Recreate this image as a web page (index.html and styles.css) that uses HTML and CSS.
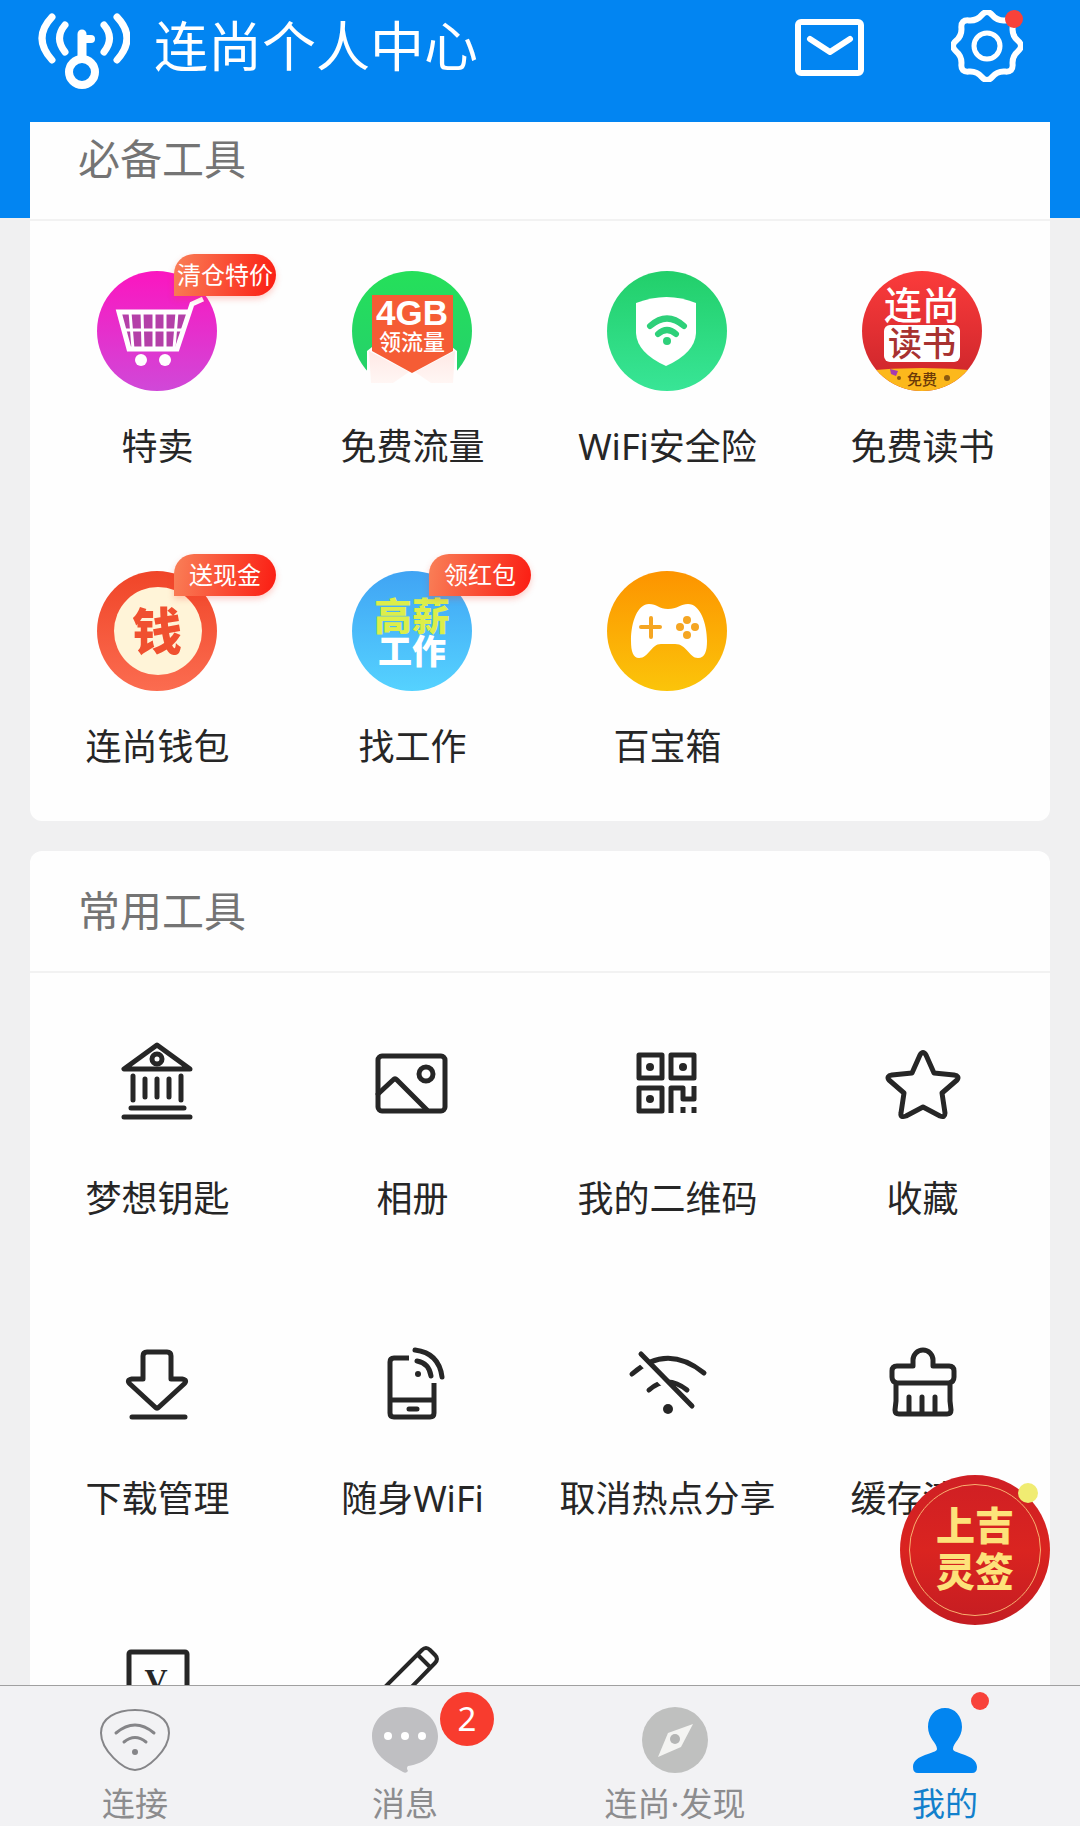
FILE: index.html
```html
<!DOCTYPE html>
<html lang="zh-CN">
<head>
<meta charset="utf-8">
<meta name="viewport" content="width=device-width, initial-scale=1">
<title>连尚个人中心</title>
<link rel="stylesheet" href="styles.css">
</head>
<body>
<header class="topbar">
  <svg class="logo" viewBox="0 0 92 92" fill="none" stroke="#fff" stroke-linecap="round">
    <g stroke-width="7">
      <path d="M14 17Q-6 38 14 60M27 25Q16 38 27 52M66 25Q77 38 66 52M79 17Q99 38 79 60"/>
      <path stroke-width="8" d="M45 39h8"/>
    </g>
    <path stroke-width="9" d="M44 34v24"/>
    <circle cx="44" cy="72" r="13" stroke-width="8"/>
  </svg>
  <h1 class="topbar-title">连尚个人中心</h1>
  <button class="icon-button" type="button" aria-label="邮件">
    <svg width="72" height="72" viewBox="0 0 72 72" fill="none" stroke="#fff" stroke-width="6" stroke-linejoin="round" stroke-linecap="round">
      <rect x="4" y="12" width="63" height="51" rx="3"/><path d="M16 29l20 13 20-13"/>
    </svg>
  </button>
  <button class="icon-button" type="button" aria-label="设置">
    <svg width="72" height="72" viewBox="0 0 72 72" fill="none" stroke="#fff">
      <path stroke-width="6" d="M67 41.2Q60.9 46.3 61.6 54.3Q62.2 62.2 54.3 61.6Q46.3 60.9 41.2 67Q36 73 30.8 67Q25.7 60.9 17.7 61.6Q9.8 62.2 10.4 54.3Q11.1 46.3 5 41.2Q-1 36 5 30.8Q11.1 25.7 10.4 17.7Q9.8 9.8 17.7 10.4Q25.7 11.1 30.8 5Q36-1 41.2 5Q46.3 11.1 54.3 10.4Q62.2 9.8 61.6 17.7Q60.9 25.7 67 30.8Q73 36 67 41.2Z"/>
      <circle cx="36" cy="36" r="13" stroke-width="5"/>
    </svg>
    <span class="dot dot-settings"></span>
  </button>
</header>

<main class="content">
  <section class="card card-first">
    <h2 class="card-title">必备工具</h2>
    <div class="grid">
      <a class="cell" href="#">
        <span class="icon">
          <svg viewBox="0 0 120 120">
            <defs><linearGradient id="g1" x2="0" y2="1"><stop offset="0" stop-color="#fb16c0"/><stop offset="1" stop-color="#d048d8"/></linearGradient></defs>
            <circle cx="60" cy="60" r="60" fill="url(#g1)"/>
            <path d="M22 41h68L80 78H31z" fill="#b440a8"/>
            <g fill="none" stroke="#fff">
              <path stroke-width="5" d="M106 28l-11 5-15 45H32L22 41h70"/>
              <path stroke-width="3" d="M26 59h60M33 41l3 37M45 41l1 37M57 41v37M68 41v37M80 41l-3 37"/>
            </g>
            <g fill="#fff"><circle cx="44" cy="89" r="6"/><circle cx="68" cy="89" r="6"/></g>
          </svg>
          <span class="tag">清仓特价</span>
        </span>
        <span class="label">特卖</span>
      </a>
      <a class="cell" href="#">
        <span class="icon">
          <svg viewBox="0 0 120 120">
            <defs>
              <linearGradient id="g2" x2="0" y2="1"><stop offset="0" stop-color="#25e05a"/><stop offset="1" stop-color="#25cf6d"/></linearGradient>
              <linearGradient id="fold" x2="0" y2="1"><stop offset="0" stop-color="#ffe9e5"/><stop offset="1" stop-color="#fff6f4"/></linearGradient>
            </defs>
            <circle cx="60" cy="60" r="60" fill="url(#g2)"/>
            <path d="M15 80l5-4h80l5 4v40H15z" fill="#fefefe"/>
            <path d="M17 80l40 21-16 11H19zM103 80l-40 21 16 11h22z" fill="url(#fold)"/>
            <path d="M20 24h81v56l-41 22-40-22z" fill="#f55c35"/>
            <text x="60" y="54" class="art-latin">4GB</text>
            <text x="60" y="79" class="art art-22">领流量</text>
          </svg>
        </span>
        <span class="label">免费流量</span>
      </a>
      <a class="cell" href="#">
        <span class="icon">
          <svg viewBox="0 0 120 120">
            <defs><linearGradient id="g3" x2="0" y2="1"><stop offset="0" stop-color="#22cf6a"/><stop offset="1" stop-color="#38e596"/></linearGradient></defs>
            <circle cx="60" cy="60" r="60" fill="url(#g3)"/>
            <path d="M29 32Q60 20 89 32V62Q88 82 59 95Q30 82 29 62z" fill="#fff"/>
            <g fill="none" stroke="#2ed07a" stroke-width="6" stroke-linecap="round"><path d="M43 55Q60 40 77 55M51 63Q60 55 69 63"/></g>
            <circle cx="60" cy="70" r="4" fill="#2ed07a"/>
          </svg>
        </span>
        <span class="label">WiFi安全险</span>
      </a>
      <a class="cell" href="#">
        <span class="icon">
          <svg viewBox="0 0 120 120">
            <defs>
              <linearGradient id="g4" x2="0" y2="1"><stop offset="0" stop-color="#fb3b3b"/><stop offset="1" stop-color="#c9242a"/></linearGradient>
              <clipPath id="c4"><circle cx="60" cy="60" r="60"/></clipPath>
            </defs>
            <g clip-path="url(#c4)">
              <rect width="120" height="120" fill="url(#g4)"/>
              <path d="M0 100Q60 94 120 100v20H0z" fill="#fcb81c"/>
              <path d="M28 98l8 2-2 5-5-2z" fill="#a63ab0"/>
              <circle cx="37" cy="107" r="2" fill="#8a5a10"/><circle cx="85" cy="107" r="3" fill="#8a5a10"/>
            </g>
            <rect x="22" y="54" width="76" height="37" rx="6" fill="#fff"/>
            <text x="60" y="48" class="art art-38">连尚</text>
            <text x="60" y="85" class="art art-34 art-brick">读书</text>
            <text x="60" y="114" class="art art-15 art-brown">免费</text>
          </svg>
        </span>
        <span class="label">免费读书</span>
      </a>
      <a class="cell" href="#">
        <span class="icon">
          <svg viewBox="0 0 120 120">
            <defs><linearGradient id="g5" x2="0" y2="1"><stop offset="0" stop-color="#f04528"/><stop offset="1" stop-color="#fb6c50"/></linearGradient></defs>
            <circle cx="60" cy="60" r="60" fill="url(#g5)"/>
            <circle cx="61" cy="60" r="44" fill="#fff4d8"/>
            <text x="60" y="79" class="art art-50 art-orange">钱</text>
          </svg>
          <span class="tag">送现金</span>
        </span>
        <span class="label">连尚钱包</span>
      </a>
      <a class="cell" href="#">
        <span class="icon">
          <svg viewBox="0 0 120 120">
            <defs><linearGradient id="g6" x2="0" y2="1"><stop offset="0" stop-color="#40a4f4"/><stop offset="1" stop-color="#55d2ff"/></linearGradient></defs>
            <circle cx="60" cy="60" r="60" fill="url(#g6)"/>
            <text x="60" y="59" class="art art-38 art-lime">高薪</text>
            <text x="60" y="93" class="art art-34 art-heavy">工作</text>
          </svg>
          <span class="tag">领红包</span>
        </span>
        <span class="label">找工作</span>
      </a>
      <a class="cell" href="#">
        <span class="icon">
          <svg viewBox="0 0 120 120">
            <defs><linearGradient id="g7" x2="0" y2="1"><stop offset="0" stop-color="#fd9400"/><stop offset="1" stop-color="#fbc40a"/></linearGradient></defs>
            <circle cx="60" cy="60" r="60" fill="url(#g7)"/>
            <path d="M42 33C50 33 52 38 61 38S74 33 81 33C93 33 100 52 100 70C100 80 98 87 91 87C82 87 80 73 68 73H54C44 73 42 87 32 87C26 87 24 80 24 70C24 50 31 33 42 33z" fill="#fff"/>
            <path d="M44 47v19M34 56h19" stroke="#f5a623" stroke-width="4" stroke-linecap="round"/>
            <g fill="#f5a623"><circle cx="80" cy="49" r="4"/><circle cx="73" cy="56" r="4"/><circle cx="88" cy="56" r="4"/><circle cx="80" cy="64" r="4"/></g>
          </svg>
        </span>
        <span class="label">百宝箱</span>
      </a>
    </div>
  </section>

  <section class="card">
    <h2 class="card-title">常用工具</h2>
    <div class="grid">
      <a class="cell" href="#">
        <span class="icon">
          <svg class="line" viewBox="0 0 120 120"><path d="M60 22L27 46h66zM36 53v24M48 56v18M60 56v18M72 56v18M84 53v24M34 85h53M27 94h66"/><circle cx="60" cy="36" r="5"/></svg>
        </span>
        <span class="label">梦想钥匙</span>
      </a>
      <a class="cell" href="#">
        <span class="icon">
          <svg class="line" viewBox="0 0 120 120"><rect x="26" y="33" width="67" height="55" rx="4"/><path d="M26 71l15-14q2-2 4 0l30 30"/><circle cx="74" cy="51" r="7"/></svg>
        </span>
        <span class="label">相册</span>
      </a>
      <a class="cell" href="#">
        <span class="icon">
          <svg class="line" viewBox="0 0 120 120">
            <path d="M32 32h23v23H32zM64 32h23v23H64zM32 65h23v23H32z"/>
            <path stroke-linecap="butt" d="M64 90V65h12v11h11V63M76 84v6M87 84v6"/>
            <g class="solid"><circle cx="43" cy="44" r="4"/><circle cx="76" cy="44" r="4"/><circle cx="43" cy="76" r="4"/></g>
          </svg>
        </span>
        <span class="label">我的二维码</span>
      </a>
      <a class="cell" href="#">
        <span class="icon">
          <svg class="line" viewBox="0 0 120 120"><path d="M58 32Q61 27 64 32L72 50L92 52Q98 53 95 57L80 70L83 90Q83 95 78 93L61 84L44 93Q38 95 39 90L42 70L27 57Q24 53 30 52L50 50z"/></svg>
        </span>
        <span class="label">收藏</span>
      </a>
      <a class="cell" href="#">
        <span class="icon">
          <svg class="line" viewBox="0 0 120 120"><path d="M46 56V33q0-4 4-4h20q4 0 4 4v23h11q6 1 2 5L62 84q-2 2-4 0L33 61q-4-4 2-5zM35 94h53"/></svg>
        </span>
        <span class="label">下载管理</span>
      </a>
      <a class="cell" href="#">
        <span class="icon">
          <svg class="line" viewBox="0 0 120 120">
            <path stroke-linecap="butt" d="M57 35H42q-4 0-4 4v51q0 4 4 4h36q4 0 4-4V60M38 77h44"/>
            <path d="M57 86h8M65 38Q77 40 79 53M63 27Q87 30 90 54"/>
            <circle class="solid" cx="66" cy="51" r="3"/>
          </svg>
        </span>
        <span class="label">随身WiFi</span>
      </a>
      <a class="cell" href="#">
        <span class="icon">
          <svg class="line" viewBox="0 0 120 120">
            <path d="M25 51Q60 20 97 50M42 67Q60 51 80 67"/>
            <path class="gap" d="M31 34l52 52"/>
            <path d="M34 31l51 52"/>
            <circle class="solid" cx="61" cy="86" r="5"/>
          </svg>
        </span>
        <span class="label">取消热点分享</span>
      </a>
      <a class="cell" href="#">
        <span class="icon">
          <svg class="line" viewBox="0 0 120 120"><path d="M51 43v-6a10 10 0 0 1 20 0v6h16q5 0 5 5v6q0 5-5 6H35q-5-1-5-6v-6q0-5 5-5zM34 60v18l-1 9q0 4 4 4h48q4 0 4-4l-1-9V60M47 74v16M60 74v16M73 74v16"/></svg>
        </span>
        <span class="label">缓存清理</span>
      </a>
      <a class="cell" href="#">
        <span class="icon">
          <svg class="line" viewBox="0 0 120 120"><rect x="32" y="29" width="58" height="62" rx="2"/><text x="59" y="68" class="glyph">V</text></svg>
        </span>
      </a>
      <a class="cell" href="#">
        <span class="icon">
          <svg class="line" viewBox="0 0 120 120"><path stroke-width="4" d="M25 92l5-25L70 27q4-4 8 0l5 5q4 4 0 8L45 79zM66 32l12 12"/></svg>
        </span>
      </a>
    </div>
  </section>
</main>

<div class="float-layer">
  <button class="lucky" type="button"><span class="lucky-text">上吉<br>灵签</span></button>
</div>

<nav class="tabs">
  <a class="tab" href="#">
    <span class="tab-icon">
      <svg viewBox="0 0 72 72" fill="none" stroke="#858588" stroke-width="2" stroke-linecap="round">
        <path d="M36 6C55 6 70 14 70 29C70 46 48 66 36 66S2 46 2 29C2 14 17 6 36 6z"/>
        <path stroke-width="3" d="M17 29Q36 13 55 29M25 38Q36 29 47 38"/><circle cx="36" cy="48" r="3" fill="#858588" stroke="none"/>
      </svg>
    </span>
    <span class="tab-label">连接</span>
  </a>
  <a class="tab" href="#">
    <span class="tab-icon">
      <svg viewBox="0 0 72 72">
        <path d="M36 3C55 3 69 16 69 32C69 48 56 60 39 62Q37 64 39 67Q37 70 34 68C18 59 3 50 3 32C3 16 17 3 36 3z" fill="#bfbfc2"/>
        <g fill="#fff"><circle cx="19" cy="32" r="4"/><circle cx="36" cy="32" r="4"/><circle cx="53" cy="32" r="4"/></g>
      </svg>
      <span class="count">2</span>
    </span>
    <span class="tab-label">消息</span>
  </a>
  <a class="tab" href="#">
    <span class="tab-icon">
      <svg viewBox="0 0 72 72"><circle cx="36" cy="36" r="33" fill="#bfc0bf"/><path d="M54 20L42 43L19 53L29 29z" fill="#f4f4f2"/><circle cx="36" cy="35" r="5" fill="#b4b5b4"/></svg>
    </span>
    <span class="tab-label">连尚·发现</span>
  </a>
  <a class="tab tab-active" href="#">
    <span class="tab-icon">
      <svg viewBox="0 0 72 72"><path d="M36 4C46 4 53 12 53 23C53 34 44 39 44 45C44 50 68 50 68 63Q68 69 63 69H9Q4 69 4 63C4 50 28 50 28 45C28 39 19 34 19 23C19 12 26 4 36 4z" fill="#0285f0"/></svg>
      <span class="dot dot-tab"></span>
    </span>
    <span class="tab-label">我的</span>
  </a>
</nav>
</body>
</html>
```
FILE: styles.css
```css
* {
  box-sizing: border-box;
}

body {
  margin: 0;
  height: 100vh;
  display: flex;
  flex-direction: column;
  background: #f0f0f1;
  color: #262626;
  font-family: "Noto Sans", "Noto Sans CJK SC", sans-serif;
}

a {
  color: inherit;
  text-decoration: none;
}

svg {
  display: block;
}

button {
  padding: 0;
  border: 0;
  background: none;
  font: inherit;
}

/* Top bar */
.topbar {
  flex: none;
  display: flex;
  align-items: center;
  padding: 0 57px 30px 38px;
  background: #0285f2;
}

.logo {
  width: 92px;
  height: 92px;
}

.topbar-title {
  flex: 1;
  margin: 0 0 0 24px;
  font-size: 54px;
  line-height: 80px;
  font-weight: 400;
  color: #fff;
}

.icon-button {
  position: relative;
}

.icon-button + .icon-button {
  margin-left: 85px;
}

.dot {
  position: absolute;
  width: 18px;
  height: 18px;
  border-radius: 50%;
  background: #f8423a;
}

.dot-settings {
  top: 0;
  right: 0;
}

/* Scrolling content */
.content {
  flex: 1;
  min-height: 0;
  padding: 0 30px;
  overflow-y: auto;
  scrollbar-width: none;
  background: linear-gradient(#0285f2 96px, #f0f0f1 96px);
}

.card {
  margin-bottom: 30px;
  border-radius: 12px;
  background: #fefefe;
}

.card-first {
  border-radius: 0 0 12px 12px;
}

.card-title {
  margin: 0;
  padding: 30px 48px;
  border-bottom: 2px solid #f2f2f2;
  font-size: 42px;
  line-height: 60px;
  font-weight: 400;
  color: #747474;
}

.card-first .card-title {
  padding-top: 7px;
}

.grid {
  display: grid;
  grid-template-columns: repeat(4, 1fr);
}

.cell {
  display: flex;
  flex-direction: column;
  align-items: center;
  height: 300px;
  padding-top: 50px;
}

.icon {
  position: relative;
  width: 121px;
  height: 120px;
}

.icon > svg {
  width: 120px;
  height: 120px;
}

.label {
  margin-top: 30px;
  font-size: 36px;
  line-height: 52px;
  white-space: nowrap;
}

.tag {
  position: absolute;
  top: -17px;
  left: 77px;
  width: 102px;
  border-radius: 20px 21px 21px 0;
  background: linear-gradient(100deg, #f98058, #fb1c12);
  box-shadow: 0 3px 6px rgba(250, 60, 40, 0.25);
  color: #fff;
  font-size: 24px;
  line-height: 42px;
  text-align: center;
  white-space: nowrap;
}

/* Line icons */
.line {
  fill: none;
  stroke: #262626;
  stroke-width: 5px;
  stroke-linecap: round;
  stroke-linejoin: round;
}

.line .solid {
  fill: #262626;
  stroke: none;
}

.line .gap {
  stroke: #fefefe;
  stroke-width: 8px;
}

.glyph {
  fill: #262626;
  stroke: none;
  font: 700 32px "Liberation Serif", serif;
  text-anchor: middle;
}

/* Lettering inside the round icons */
.art,
.art-latin {
  fill: #fff;
  text-anchor: middle;
}

.art {
  font-family: "Noto Sans CJK SC", sans-serif;
  font-weight: 500;
}

.art-latin {
  font: 700 35px "Liberation Sans", sans-serif;
}

.art-15 { font-size: 15px; }
.art-22 { font-size: 22px; }
.art-34 { font-size: 34px; }
.art-38 { font-size: 38px; }
.art-50 { font-size: 50px; }

.art-brick { fill: #a83230; }
.art-brown { fill: #6b3a08; }

.art-heavy,
.art-orange,
.art-lime {
  font-weight: 900;
}

.art-orange { fill: #f0502f; }
.art-lime { fill: #dcee4a; }

/* Floating button */
.float-layer {
  position: relative;
  flex: none;
  height: 0;
}

.lucky {
  position: absolute;
  right: 30px;
  bottom: 60px;
  display: grid;
  place-items: center;
  width: 150px;
  height: 150px;
  padding-bottom: 8px;
  border-radius: 50%;
  background: linear-gradient(#cf1f24, #da2420 50%, #c41c22);
  color: #fde27a;
  font-family: "Noto Sans CJK SC", sans-serif;
  font-size: 39px;
  line-height: 46px;
  font-weight: 900;
}

.lucky::before {
  content: "";
  position: absolute;
  inset: 9px;
  border: 1px solid #f8b070;
  border-radius: 50%;
}

.lucky::after {
  content: "";
  position: absolute;
  top: 8px;
  right: 12px;
  width: 20px;
  height: 20px;
  border-radius: 50%;
  background: #f0ec72;
}

/* Bottom tabs */
.tabs {
  flex: none;
  display: grid;
  grid-template-columns: repeat(4, 1fr);
  border-top: 1px solid #a0a0a0;
  background: #f2f2f4;
}

.tab {
  display: flex;
  flex-direction: column;
  align-items: center;
  padding: 18px 0 2px;
  color: #8c8c8e;
}

.tab-active {
  color: #1280cc;
}

.tab-icon {
  position: relative;
  width: 72px;
  height: 72px;
}

.tab-label {
  margin-top: 8px;
  font-size: 33px;
  line-height: 40px;
}

.count {
  position: absolute;
  top: -12px;
  left: 71px;
  width: 54px;
  border-radius: 50%;
  background: #f83c2e;
  color: #fff;
  font-size: 33px;
  line-height: 54px;
  text-align: center;
}

.dot-tab {
  top: -12px;
  left: 62px;
}
```
